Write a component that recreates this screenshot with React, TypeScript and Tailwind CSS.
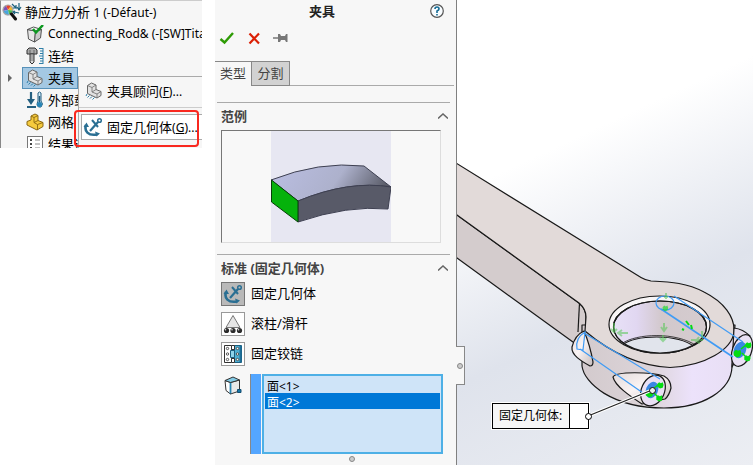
import { useState, type ReactNode } from "react";

function StudyIcon() {
  return (
    <svg width="20" height="18" viewBox="0 0 20 18" className="shrink-0" aria-hidden="true">
      <path d="M1 8A5 5 0 0 1 4 2.500L6 7z" fill="#7b51b5" />
      <path d="M4 2.500A5 5 0 0 1 9 3L6 7z" fill="#e8452c" />
      <path d="M9 3a5 5 0 0 1 2 4.500L6 7z" fill="#f4b92d" />
      <path d="M11 7.500a5 5 0 0 1-4 4.500L6 7z" fill="#4cb650" />
      <path d="M7 12a5 5 0 0 1-6-4l5-1z" fill="#48a6dc" />
      <circle cx="6" cy="7" r="5" fill="none" stroke="#a5a5a5" strokeWidth="1.200" />
      <path d="M9.500 11l4 5" stroke="#111" strokeWidth="3" strokeLinecap="round" />
      <path d="M10 1l4 4v-3M14 5h-3M17 0v6M15 4l2 3 2-3M12 9l5 1M13 8l-2 1 2 2" fill="none" stroke="#1d627e" strokeWidth="1.200" />
    </svg>
  );
}

function PartIcon() {
  return (
    <svg width="18" height="18" viewBox="0 0 18 18" className="shrink-0" aria-hidden="true">
      <path d="M1.500 4.500l8 1.500-1 11-6-3z" fill="#e6e6e6" stroke="#555" />
      <path d="M9.500 6l6-1.500-1 8.500-6 4z" fill="#c9c9c9" stroke="#555" />
      <path d="M1.500 4.500l6-2.500 8 2.500-6 1.500z" fill="#f5f5f5" stroke="#555" />
      <path d="M7 4l3 3.500L17 0" fill="none" stroke="#0c981f" strokeWidth="2.500" />
    </svg>
  );
}

function BoltIcon() {
  return (
    <svg width="18" height="18" viewBox="0 0 18 18" className="shrink-0" aria-hidden="true">
      <path d="M1 3l2-2h6l2 2v4H1z" fill="#aaa" stroke="#333" />
      <path d="M4 7h4v8l-2 2-2-2z" fill="#ddd" stroke="#333" />
      <path d="M4 9h4M4 11h4M4 13h4M4 3v4M8 3v4" stroke="#555" strokeWidth="0.800" />
      <path d="M17 1v16M13 1.500h4M14 4h3M14 6.500h3M13 9h4M14 11.500h3M14 14h3M13 16.500h4" stroke="#2e7fa7" />
    </svg>
  );
}

function FixtureIcon() {
  return (
    <svg width="18" height="18" viewBox="0 0 18 18" className="shrink-0" aria-hidden="true">
      <path d="M2.500 3.500l4-2.500 4.500 2v4.500l5 2v4L12 16 2.500 11.500z" fill="#e2e2e2" stroke="#666" />
      <path d="M2.500 3.500l4.500 2v4.500l5 2v4M7 5.500L11 3M7 10l4-2.500M12 12l4-2.500" fill="none" stroke="#777" strokeWidth="0.900" />
      <path d="M2 12l-1 2M4.500 13.500l-2 2M7 14.500l-2 2M9.500 15.500l-2 2" stroke="#2e7fa7" />
    </svg>
  );
}

function LoadIcon() {
  return (
    <svg width="18" height="18" viewBox="0 0 18 18" className="shrink-0" aria-hidden="true">
      <path d="M5 1v10M1 16h9" fill="none" stroke="#245f80" strokeWidth="2.200" />
      <path d="M1 8h8l-4 6z" fill="#245f80" />
      <path d="M12 2q1.500-2 3 0v8q3 3 0 6-3 1-4-2 0-2 1-4z" fill="#d7eefb" stroke="#245f80" />
      <path d="M13.500 5v7" stroke="#245f80" strokeWidth="1.500" />
      <circle cx="13.500" cy="13.500" r="2.500" fill="#2784b6" />
    </svg>
  );
}

function MeshIcon() {
  return (
    <svg width="18" height="18" viewBox="0 0 18 18" className="shrink-0" aria-hidden="true">
      <path d="M5 3l4-2 3 1.500v5l5 2v4L11 17l-10-5V8.500l4-1.500z" fill="#f5ca3d" stroke="#8a6812" />
      <path d="M5 3l3 1.500v5l3.500 2V17M8 4.500l4-2M8 9.500l4-2M11.500 11.500l5.500-2" fill="none" stroke="#8a6812" strokeWidth="0.900" />
    </svg>
  );
}

function ResultsIcon() {
  return (
    <svg width="18" height="18" viewBox="0 0 18 18" className="shrink-0" aria-hidden="true">
      <rect x="1.500" y="1.500" width="15" height="15" fill="#fff" stroke="#777" />
      <path d="M4 5h2M4 9h2M4 13h2" stroke="#444" strokeWidth="2" />
      <path d="M9 5h5M9 9h5M9 13h5" stroke="#888" />
    </svg>
  );
}

function AnchorIcon() {
  return (
    <svg width="20" height="20" viewBox="0 0 20 20" fill="none" stroke="#2a6f93" className="shrink-0" aria-hidden="true">
      <path d="M15 5L7 14" strokeWidth="2.200" />
      <path d="M9 3l6 7" strokeWidth="2" />
      <circle cx="16.500" cy="3.500" r="1.800" strokeWidth="1.500" />
      <path d="M3 8C1 14 5 19 14 17.500" strokeWidth="2.600" />
      <path d="M0.500 10L3.500 5.500 6 10zM12 14.500l5 2-3.500 3z" fill="#2a6f93" stroke="none" />
    </svg>
  );
}

function RollerIcon() {
  return (
    <svg width="20" height="20" viewBox="0 0 20 20" className="shrink-0" aria-hidden="true">
      <path d="M10 1.500L3 13.500h14z" fill="#e6e6e6" stroke="#777" />
      {[3.5, 10, 16.5].map((x) => (
        <g key={x}>
          <circle cx={x} cy="16.500" r="2.600" fill="#2b2b2b" />
          <circle cx={x - 1} cy="15.700" r="0.800" fill="#ddd" />
        </g>
      ))}
    </svg>
  );
}

function HingeIcon() {
  return (
    <svg width="20" height="20" viewBox="0 0 20 20" className="shrink-0" aria-hidden="true">
      <path d="M1.500 1.500h7v17h-7z" fill="#fff" stroke="#333" />
      <path d="M11.500 1.500h7v17h-7z" fill="#4fb0d4" stroke="#1c5f80" />
      <path d="M17.500 2v16" stroke="#1c6f99" strokeWidth="2" />
      <path d="M8.500 1.500h3v4h-3zM8.500 14.500h3v4h-3z" fill="#fff" stroke="#333" />
      <path d="M7.500 6.500h4v7h-4z" fill="#8ed3ea" stroke="#1c5f80" />
      {[4.5, 10, 15.5].map((y) => (
        <g key={y} fill="#fff" stroke="#333" strokeWidth="0.800">
          <circle cx="4.500" cy={y} r="1.200" />
          <circle cx="14.500" cy={y} r="1.200" />
        </g>
      ))}
    </svg>
  );
}

function FaceIcon() {
  return (
    <svg width="18" height="20" viewBox="0 0 18 20" aria-hidden="true">
      <path d="M1 4.500l5.500 2V18L2 14.500z" fill="#fff" stroke="#333" />
      <path d="M6.500 6.500L15.500 4v11L6.500 18z" fill="#e9e9e9" stroke="#333" />
      <path d="M1 4.500L9 1l6.500 3-9 2.500z" fill="#83cbe6" stroke="#333" />
      <path d="M6.500 7v10.500" stroke="#2685b3" strokeWidth="1.800" />
      <path d="M13.500 13.500h3.500v3h-3.500z" fill="#1777a8" stroke="#134d70" />
    </svg>
  );
}

const TREE: { label: ReactNode; id: string; icon: ReactNode }[] = [
  { id: "part", label: <span className="text-xs">Connecting_Rod&amp; (-[SW]Tita</span>, icon: <PartIcon /> },
  { id: "connections", label: "连结", icon: <BoltIcon /> },
  { id: "fixtures", label: "夹具", icon: <FixtureIcon /> },
  { id: "loads", label: "外部载荷", icon: <LoadIcon /> },
  { id: "mesh", label: "网格", icon: <MeshIcon /> },
  { id: "results", label: "结果选项", icon: <ResultsIcon /> },
];

function StudyTree() {
  return (
    <nav
      aria-label="算例"
      className="relative h-[148px] w-[202px] overflow-hidden border-l border-t border-l-[#888] border-t-[#ccc] bg-[#f6f6f6]"
    >
      <div className="flex h-[22px] items-center gap-[3px] pl-px">
        <StudyIcon />
        <span className="whitespace-nowrap">
          静应力分析 <span className="text-xs">1 (-Défaut-)</span>
        </span>
      </div>
      <ul>
        {TREE.map((item) => (
          <li key={item.id} className="flex h-[22px] items-center whitespace-nowrap">
            <span className="w-[21px] shrink-0 pl-[7px]">
              {item.id === "fixtures" && (
                <svg width="4" height="8" viewBox="0 0 4 8" aria-hidden="true">
                  <path d="M0 0l4 4-4 4z" fill="#666" />
                </svg>
              )}
            </span>
            <span
              className={
                item.id === "fixtures"
                  ? "flex h-[22px] items-center gap-1 border border-[#5791b9] bg-[#a4c8e3] px-[3px]"
                  : "flex items-center gap-1 border-x border-transparent px-[3px]"
              }
            >
              {item.icon}
              {item.label}
            </span>
          </li>
        ))}
      </ul>
      <div role="menu" className="absolute left-[77px] top-[75px] flex h-[80px] w-[130px] flex-col border border-[#aaa] bg-[#f6f6f6] pt-0.5">
        <button role="menuitem" className="flex h-6 items-center gap-1 whitespace-nowrap pl-1.5">
          <FixtureIcon />
          <span>
            夹具顾问<span className="text-xs">(<u>F</u>)...</span>
          </span>
        </button>
        <hr className="mb-1.5 mt-1 border-[#ccc]" />
        <button role="menuitem" className="ml-0.5 flex h-[26px] items-center gap-1 whitespace-nowrap border border-[#aaa] bg-white pl-px">
          <AnchorIcon />
          <span>
            固定几何体<span className="text-xs">(<u>G</u>)...</span>
          </span>
        </button>
      </div>
      <div className="pointer-events-none absolute left-[73px] top-[109px] h-[37px] w-[125px] rounded border-2 border-[#f9281f]" />
    </nav>
  );
}

function SectionTitle({ children }: { children: ReactNode }) {
  return (
    <div className="mb-0.5 ml-0.5 mr-1.5 flex h-[26px] items-center justify-between border-t border-[#aaa] pl-1 pr-[2px]">
      <h2 className="font-bold text-[#444]">{children}</h2>
      <button aria-label="折叠">
        <svg width="10" height="6" viewBox="0 0 10 6" aria-hidden="true">
          <path d="M0 5.500l5-4.500 5 4.500" fill="none" stroke="#666" strokeWidth="1.500" />
        </svg>
      </button>
    </div>
  );
}

const TYPES = [
  { label: "固定几何体", icon: <AnchorIcon /> },
  { label: "滚柱/滑杆", icon: <RollerIcon /> },
  { label: "固定铰链", icon: <HingeIcon /> },
];

function PropertyPanel() {
  const [type, setType] = useState("固定几何体");
  return (
    <aside className="relative z-10 flex w-[242px] shrink-0 flex-col border-r border-[#808080] bg-[#f7f7f7]">
      <header className="flex h-[22px] items-center pl-[94px] pr-3">
        <h1 className="font-bold text-[#222]">夹具</h1>
        <button aria-label="帮助" className="ml-auto">
          <svg width="14" height="14" viewBox="0 0 14 14" aria-hidden="true">
            <circle cx="7" cy="7" r="6.300" fill="#f8fcff" stroke="#555" strokeWidth="1.200" />
            <path d="M5 5q0-2 2-2t2 2q0 1-2 2v2M7 10v1.500" fill="none" stroke="#156b94" strokeWidth="1.600" />
          </svg>
        </button>
      </header>
      <div className="mt-0.5 flex h-7 items-center gap-3 pl-1">
        <button aria-label="确定">
          <svg width="16" height="14" viewBox="0 0 16 14" aria-hidden="true">
            <path d="M1.500 8l4 3.500L14 2" fill="none" stroke="#2e9b05" strokeWidth="2.400" />
          </svg>
        </button>
        <button aria-label="取消">
          <svg width="14" height="14" viewBox="0 0 14 14" aria-hidden="true">
            <path d="M2.500 2.500l9.500 10M12 2.500l-9.500 10" stroke="#db2005" strokeWidth="2.200" />
          </svg>
        </button>
        <button aria-label="保持可见">
          <svg width="15" height="12" viewBox="0 0 15 12" aria-hidden="true">
            <path d="M0 6h6" stroke="#777" strokeWidth="1.500" />
            <path d="M5 2h2l1 2h4l1-2h1.500v8H13l-1-2H8l-1 2H5z" fill="#777" />
          </svg>
        </button>
      </div>
      <div role="tablist" className="mr-0.5 mt-[9px] flex h-[25px] text-[#444]">
        <button role="tab" aria-selected="true" className="w-[37px] border-r border-t border-[#888] pb-0.5">类型</button>
        <button role="tab" aria-selected="false" className="w-[38px] border border-l-0 border-[#888] bg-[#d2d2d2] pb-px">分割</button>
        <span className="flex-1 border-b border-[#aaa]" />
      </div>
      <div className="mt-4">
        <SectionTitle>范例</SectionTitle>
      </div>
      <div className="ml-[6px] mr-[15px] flex h-[113px] justify-center border border-b-[#ddd] border-l-[#777] border-r-[#ddd] border-t-[#777] bg-[#f8f8f8]">
        <svg width="120" height="111" viewBox="0 0 120 111" className="bg-[#e7e7f2]" role="img" aria-label="范例">
          <defs>
            <linearGradient id="slab" x1="0" y1="0.300" x2="1" y2="0.500">
              <stop offset="0" stopColor="#b9bde0" />
              <stop offset="0.550" stopColor="#adb1cc" />
              <stop offset="1" stopColor="#555762" />
            </linearGradient>
          </defs>
          <path d="M0 49Q48 30 93 35L120 56Q78 49 27 70Z" fill="url(#slab)" stroke="#3e4051" />
          <path d="M27 70Q78 49 120 56L117 78Q77 74 27 91Z" fill="#585a68" stroke="#3e4051" />
          <path d="M0.500 49L27 70v21L0.500 71z" fill="#05b20b" stroke="#073e08" />
        </svg>
      </div>
      <div className="mt-[11px]">
        <SectionTitle>标准 (固定几何体)</SectionTitle>
      </div>
      <div className="flex flex-col gap-1.5 pl-[6px]">
        {TYPES.map((t) => (
          <button key={t.label} aria-pressed={type === t.label} onClick={() => setType(t.label)} className="flex h-6 items-center gap-1.5 text-left">
            <span
              className={
                type === t.label
                  ? "flex size-6 items-center justify-center border border-[#777] bg-[#b9b9b9]"
                  : "flex size-6 items-center justify-center border border-[#999] bg-white"
              }
            >
              {t.icon}
            </span>
            <span className="pb-0.5">{t.label}</span>
          </button>
        ))}
      </div>
      <div className="mt-2 flex h-20 pl-[9px] pr-[13px]">
        <div className="w-[26px] pt-0.5">
          <FaceIcon />
        </div>
        <div className="mr-px w-[11px] border-l border-[#888] bg-[#54a6ff]" />
        <select
          aria-label="夹具的面"
          size={4}
          defaultValue="2"
          className="min-w-0 flex-1 appearance-none overflow-hidden border-2 border-[#4eb0e6] bg-[#cfe4f8] p-px text-xs outline-none"
        >
          <option value="1" className="h-4 min-h-4 px-0.5 py-0 leading-[14px]">面&lt;1&gt;</option>
          <option value="2" className="h-4 min-h-4 px-0.5 py-0 leading-[14px] checked:bg-[linear-gradient(#0078d7,#0078d7)] checked:text-white">面&lt;2&gt;</option>
        </select>
      </div>
      <span className="mx-auto mt-0.5 size-1.5 translate-x-4 rounded-full border border-[#888] bg-[#ccc]" />
      <button
        aria-label="收起面板"
        className="absolute -right-[9px] top-[346px] flex h-[39px] w-[9px] items-center justify-center border border-l-0 border-[#888] bg-[#f7f7f7]"
      >
        <span className="size-1.5 shrink-0 rounded-full border border-[#888] bg-[#ccc]" />
      </button>
    </aside>
  );
}

function Splat({ x, y, s = 1, o = 1 }: { x: number; y: number; s?: number; o?: number }) {
  return (
    <path
      transform={`translate(${x} ${y}) scale(${s})`}
      d="M-3-1l2-2 2 1 2-1 1 3-1 3-3 1-3-2z"
      fill="#05dc12"
      opacity={o}
    />
  );
}

function Viewport() {
  return (
    <main className="relative min-w-0 flex-1 overflow-hidden bg-[linear-gradient(155deg,#ffffff_32%,#dfe3ec_64%,#eceef3_100%)]">
      <svg className="absolute inset-0 size-full" viewBox="457 0 296 465" preserveAspectRatio="xMinYMin slice" role="img" aria-label="连杆模型">
        <defs>
          <linearGradient id="ring" x1="0" x2="1">
            <stop offset="0" stopColor="#d3cacd" />
            <stop offset="0.450" stopColor="#dcd4d9" />
            <stop offset="0.720" stopColor="#ece2fb" />
            <stop offset="1" stopColor="#e8dff4" />
          </linearGradient>
          <linearGradient id="bore" x1="0" x2="1">
            <stop offset="0" stopColor="#e8e1f7" />
            <stop offset="0.250" stopColor="#e1d7f1" />
            <stop offset="0.520" stopColor="#d2c8cc" />
            <stop offset="1" stopColor="#d5cccf" />
          </linearGradient>
          <linearGradient id="boss" x1="0" y1="0" x2="1" y2="1">
            <stop offset="0" stopColor="#e2dadb" />
            <stop offset="0.450" stopColor="#faf3f3" />
            <stop offset="1" stopColor="#c5bcbd" />
          </linearGradient>
          <clipPath id="boreClip">
            <ellipse cx="660" cy="327" rx="46.500" ry="26" />
          </clipPath>
        </defs>
        <g stroke="#191919" strokeWidth="1.200" strokeLinejoin="round">
          <path d="M450 210L579 303Q586 309 586 317L584 350L450 253Z" fill="#d4cccd" />
          <path d="M582 325V366C584 383 612 408 664 408C704 408 731 390 732 367L735 325Z" fill="url(#ring)" />
          <path
            d="M450 159.300L641 277.500Q645 280 651 281C672 282 687 283 704 292C724 302 735 317 734 332C732 349 706 366 670 367.500C640 366 611 353 585 331L586 317Q586 309 579 303L450 210Z"
            fill="#e2dad9"
          />
          <path d="M579.500 303L578 332" />
          <ellipse cx="659.500" cy="324.500" rx="50.500" ry="28.500" fill="#f8f5f6" />
          <ellipse cx="660" cy="327" rx="46.500" ry="26" fill="url(#bore)" />
          <g clipPath="url(#boreClip)">
            <path d="M622 345C636 335 676 333 695 347L690 360H625z" fill="#e1e4ec" />
            <path d="M622 343.500C636 333.500 676 331.500 697 346" fill="none" strokeWidth="0.800" />
          </g>
          <ellipse cx="660" cy="327" rx="46.500" ry="26" fill="none" />
          <path d="M584 331Q575 335 572 347C571 355 581 361 590 366Q593 366 593 362Q590 345 584 331Z" fill="url(#boss)" />
          <path d="M642 404C630 396 615 386 613 377C616 371 651 372 664 376Q671 380 671 388Q669 396 665 399Z" fill="url(#boss)" />
          <ellipse cx="653" cy="390.500" rx="11.500" ry="16" transform="rotate(24 653 390.500)" fill="#e9e0f4" />
          <path d="M734 328Q743 329 750 336L732 367Z" fill="#e6ddec" />
          <ellipse cx="742" cy="350.500" rx="9.500" ry="16.500" transform="rotate(20 742 350.500)" fill="#e9e0f4" />
        </g>
        <g fill="none" stroke="#3f9bf5" strokeWidth="1.200">
          <path d="M583 350L577 349Q575 338 585 332ZM584 333L660 379M580 349L643 393" />
          <ellipse cx="665" cy="303" rx="9" ry="7" />
          <path d="M674 296L743 342" />
          <path d="M661 309L733 357" strokeWidth="1.600" />
        </g>
        <g opacity="0.550" fill="none" stroke="#55c755" strokeWidth="2">
          <path d="M666 293v6M664 297h4M664 323v8M661 327l3 4 3-4M663 335v6M660 338l3 3 3-3M614 323v8M611 329l3 3 3-3M628 333h-9M622 330l-4 3 4 3M691 340h12M699 337l-3 4 4 2M702 331v7" />
        </g>
        <Splat x={665} y={308} s={0.8} o={0.6} />
        <path d="M686 321l3 4M691 325l1 4M682 329l2 1" stroke="#05dc12" strokeWidth="2" />
        {[
          [652, 390],
          [740, 350],
        ].map(([x, y]) => (
          <g key={x}>
            <ellipse cx={x} cy={y} rx="6" ry="8.500" transform={`rotate(24 ${x} ${y})`} fill="#3a87e3" />
            <Splat x={x - 3} y={y + 3} s={1.1} />
            <Splat x={x + 8} y={y - 5} s={0.9} />
            <Splat x={x + 7} y={y + 8} s={0.9} />
            <path d={`M${x + 1} ${y - 1}l5-4M${x + 2} ${y + 3}l4 4`} stroke="#05dc12" strokeWidth="1.500" />
          </g>
        ))}
        <path d="M588 416L652 390" stroke="#fff" strokeWidth="3" />
        <path d="M588 416L652 390" stroke="#222" strokeWidth="1.200" />
        <circle cx="652.500" cy="390.500" r="3" fill="#eee" stroke="#111" />
      </svg>
      <div className="absolute left-[35px] top-[403px] flex h-[26px] w-[97px] border border-black bg-white text-xs ring-1 ring-white">
        <span className="flex w-[77px] items-center border-r border-black bg-[#f6f6f6] pl-1.5">固定几何体:</span>
        <span className="absolute -right-1 top-[9px] size-[7px] rounded-full border border-black bg-white" />
      </div>
    </main>
  );
}

export default function App() {
  return (
    <div className="flex min-h-screen w-full bg-white font-['Noto_Sans','Noto_Sans_CJK_SC',sans-serif] text-[13px] leading-4 text-black">
      <div className="mr-[13px] shrink-0">
        <StudyTree />
      </div>
      <PropertyPanel />
      <Viewport />
    </div>
  );
}
